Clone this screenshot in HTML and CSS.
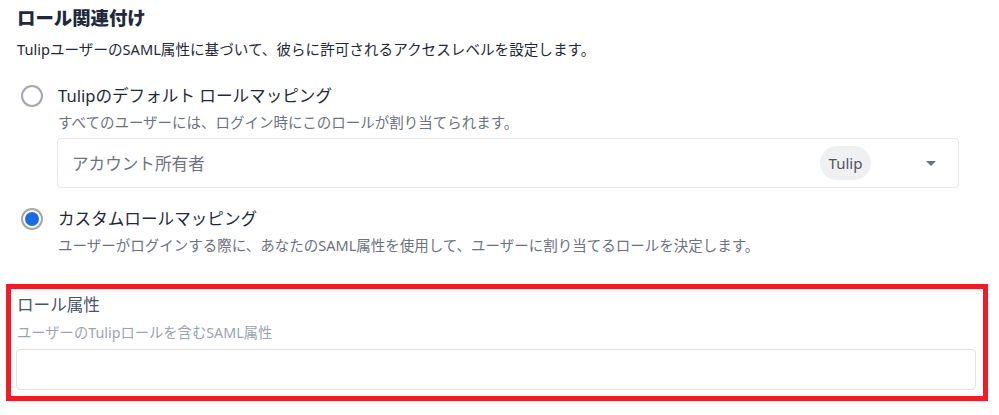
FILE: index.html
```html
<!DOCTYPE html>
<html lang="ja">
<head>
<meta charset="utf-8">
<title>ロール関連付け</title>
<link rel="stylesheet" href="styles.css">
</head>
<body>
  <section class="settings">
    <h2 class="settings-title">ロール関連付け</h2>
    <p class="settings-desc">TulipユーザーのSAML属性に基づいて、彼らに許可されるアクセスレベルを設定します。</p>

    <label class="radio-row radio-row--first">
      <span class="radio"></span>
      <span class="radio-label">Tulipのデフォルト ロールマッピング</span>
    </label>
    <p class="radio-help">すべてのユーザーには、ログイン時にこのロールが割り当てられます。</p>

    <div class="select">
      <span class="select-value">アカウント所有者</span>
      <span class="select-tag">Tulip</span>
      <span class="select-caret"></span>
    </div>

    <label class="radio-row radio-row--second">
      <span class="radio radio--checked"></span>
      <span class="radio-label">カスタムロールマッピング</span>
    </label>
    <p class="radio-help">ユーザーがログインする際に、あなたのSAML属性を使用して、ユーザーに割り当てるロールを決定します。</p>
  </section>

  <div class="field-frame">
    <div class="field">
      <div class="field-label">ロール属性</div>
      <div class="field-help">ユーザーのTulipロールを含むSAML属性</div>
      <input class="field-input" type="text">
    </div>
  </div>
</body>
</html>
```

FILE: styles.css
```css
html, body {
  margin: 0;
  padding: 0;
  background: #ffffff;
}

body {
  font-family: "Noto Sans", "Noto Sans CJK JP", sans-serif;
  color: #1f2937;
  width: 999px;
}

.settings {
  padding: 6px 0 0 17px;
}

.settings-title {
  margin: 0;
  font-size: 18.4px;
  line-height: 24px;
  font-weight: 800;
  color: #1e293b;
}

.settings-desc {
  margin: 9px 0 0;
  font-size: 14.6px;
  line-height: 20px;
  color: #1f2937;
}

.radio-row {
  display: flex;
  align-items: center;
  height: 24px;
  margin-left: 4px;
}

.radio-row--first {
  margin-top: 25px;
}

.radio-row--second {
  margin-top: 19px;
}

.radio {
  box-sizing: border-box;
  width: 22px;
  height: 22px;
  border: 2px solid #a3a7ad;
  border-radius: 50%;
  flex: none;
  display: flex;
  align-items: center;
  justify-content: center;
}

.radio--checked::after {
  content: "";
  width: 14px;
  height: 14px;
  border-radius: 50%;
  background: #1b6ce3;
}

.radio-label {
  margin-left: 15px;
  font-size: 16.6px;
  line-height: 24px;
  color: #1f2937;
}

.radio-help {
  margin: 4px 0 0 41px;
  font-size: 14.5px;
  line-height: 20px;
  color: #6b7280;
}

.select {
  box-sizing: border-box;
  margin: 6px 0 0 40px;
  width: 902px;
  height: 50px;
  border: 1px solid #e6e8eb;
  border-radius: 4px;
  display: flex;
  align-items: center;
  padding: 0 22px 0 14px;
}

.select-value {
  flex: 1;
  font-size: 16.6px;
  color: #6b7280;
}

.select-tag {
  box-sizing: border-box;
  width: 51px;
  height: 34px;
  border-radius: 17px;
  background: #eff0f2;
  color: #4b5563;
  font-size: 15px;
  display: flex;
  align-items: center;
  justify-content: center;
  margin-right: 55px;
}

.select-caret {
  width: 0;
  height: 0;
  border-left: 5px solid transparent;
  border-right: 5px solid transparent;
  border-top: 5px solid #6b7280;
}

.field-frame {
  margin: 29px 11px 0 6px;
  border: 5px solid #ee1c25;
}

.field {
  padding: 5px 7px 6px 5px;
}

.field-label {
  padding-left: 1px;
  font-size: 16.6px;
  line-height: 22px;
  color: #475569;
}

.field-help {
  margin-top: 7px;
  padding-left: 1px;
  font-size: 14.3px;
  line-height: 20px;
  color: #9ca3af;
}

.field-input {
  display: block;
  box-sizing: border-box;
  margin-top: 6px;
  width: 100%;
  height: 41px;
  border: 1px solid #dfe1e5;
  border-radius: 4px;
  background: #ffffff;
  font: inherit;
  outline: none;
}
```
